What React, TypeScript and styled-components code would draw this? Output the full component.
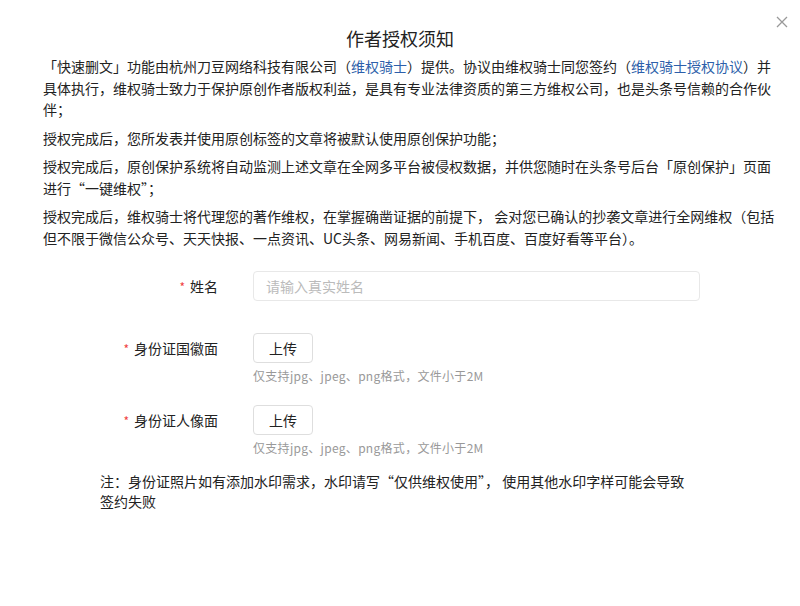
import React from 'react';
import styled, { createGlobalStyle } from 'styled-components';

const GlobalStyle = createGlobalStyle`
  html, body {
    margin: 0;
    padding: 0;
    background: #fff;
  }
  body {
    font-family: "Noto Sans CJK SC", "Liberation Sans", sans-serif;
    color: #222;
  }
`;

const notices = [
  '授权完成后，您所发表并使用原创标签的文章将被默认使用原创保护功能；',
  '授权完成后，原创保护系统将自动监测上述文章在全网多平台被侵权数据，并供您随时在头条号后台「原创保护」页面进行“一键维权”；',
  '授权完成后，维权骑士将代理您的著作维权，在掌握确凿证据的前提下， 会对您已确认的抄袭文章进行全网维权（包括但不限于微信公众号、天天快报、一点资讯、UC头条、网易新闻、手机百度、百度好看等平台）。',
];

const UPLOAD_HINT = '仅支持jpg、jpeg、png格式，文件小于2M';

export default function App() {
  return (
    <>
      <GlobalStyle />
      <Dialog>
        <CloseButton aria-label="关闭">
          <svg width="12" height="12" viewBox="0 0 12 12">
            <path d="M1 1 L11 11 M11 1 L1 11" stroke="#999" strokeWidth="1.3" fill="none" />
          </svg>
        </CloseButton>
        <Title>作者授权须知</Title>
        <Content>
          <Paragraph>
            「快速删文」功能由杭州刀豆网络科技有限公司（<Link>维权骑士</Link>）提供。协议由维权骑士同您签约（
            <Link>维权骑士授权协议</Link>）并具体执行，维权骑士致力于保护原创作者版权利益，是具有专业法律资质的第三方维权公司，也是头条号信赖的合作伙伴；
          </Paragraph>
          {notices.map((text) => (
            <Paragraph key={text}>{text}</Paragraph>
          ))}
        </Content>
        <Form>
          <FormItem $gap={31}>
            <Label>
              <Required>*</Required>姓名
            </Label>
            <Control>
              <Input placeholder="请输入真实姓名" />
            </Control>
          </FormItem>
          <FormItem $gap={20}>
            <Label>
              <Required>*</Required>身份证国徽面
            </Label>
            <Control>
              <UploadButton>上传</UploadButton>
              <Hint>{UPLOAD_HINT}</Hint>
            </Control>
          </FormItem>
          <FormItem $gap={14}>
            <Label>
              <Required>*</Required>身份证人像面
            </Label>
            <Control>
              <UploadButton>上传</UploadButton>
              <Hint>{UPLOAD_HINT}</Hint>
            </Control>
          </FormItem>
          <Note>
            注：身份证照片如有添加水印需求，水印请写“仅供维权使用”， 使用其他水印字样可能会导致签约失败
          </Note>
        </Form>
      </Dialog>
    </>
  );
}

const Dialog = styled.div`
  position: relative;
  width: 800px;
  height: 606px;
  box-sizing: border-box;
  padding-top: 26px;
  background: #fff;
`;

const CloseButton = styled.button`
  position: absolute;
  top: 16px;
  right: 12px;
  width: 12px;
  height: 12px;
  padding: 0;
  border: none;
  background: transparent;
  display: flex;
  cursor: pointer;
`;

const Title = styled.h2`
  margin: 0;
  font-size: 18px;
  line-height: 24px;
  font-weight: normal;
  text-align: center;
  color: #222;
`;

const Content = styled.div`
  width: 736px;
  margin: 6px 0 0 43px;
`;

const Paragraph = styled.p`
  margin: 0 0 7px;
  font-size: 14px;
  line-height: 21.5px;
  color: #222;
`;

const Link = styled.a`
  color: #2d5faa;
  text-decoration: none;
  cursor: pointer;
`;

const Form = styled.div`
  width: 600px;
  margin: 22px 0 0 100px;
`;

const FormItem = styled.div<{ $gap: number }>`
  display: grid;
  grid-template-columns: 118px 1fr;
  column-gap: 35px;
  align-items: start;
  margin-bottom: ${(p) => p.$gap}px;
`;

const Label = styled.label`
  font-size: 14px;
  line-height: 30px;
  text-align: right;
  color: #222;
`;

const Required = styled.span`
  color: #f04142;
  font-size: 12px;
  margin-right: 5px;
`;

const Control = styled.div`
  display: flex;
  flex-direction: column;
  align-items: flex-start;
`;

const Input = styled.input`
  width: 100%;
  height: 30px;
  box-sizing: border-box;
  padding: 0 12px;
  border: 1px solid #e8e8e8;
  border-radius: 4px;
  font-family: inherit;
  font-size: 14px;
  color: #222;
  outline: none;

  &::placeholder {
    color: #bbb;
  }
`;

const UploadButton = styled.button`
  width: 60px;
  height: 30px;
  border: 1px solid #dedede;
  border-radius: 4px;
  background: #fff;
  font-family: inherit;
  font-size: 14px;
  color: #222;
  cursor: pointer;
`;

const Hint = styled.div`
  margin-top: 4px;
  font-size: 12px;
  line-height: 18px;
  letter-spacing: 0.3px;
  color: #999;
`;

const Note = styled.p`
  width: 592px;
  margin: 0;
  font-size: 14px;
  line-height: 20px;
  color: #222;
`;
